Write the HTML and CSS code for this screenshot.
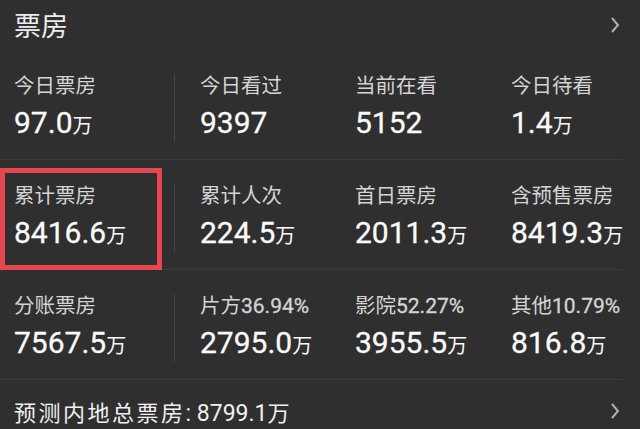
FILE: index.html
```html
<!DOCTYPE html>
<html lang="zh">
<head>
    <meta charset="UTF-8">
    <meta name="viewport" content="width=device-width, initial-scale=1.0">
    <title>票房</title>
    <link rel="stylesheet" href="styles.css">
</head>
<body>

<div class="header">
    <h1>票房</h1>
    <svg class="arrow" width="10" height="18" viewBox="0 0 10 18"><path d="M2 2 L8 9 L2 16" fill="none" stroke="#b0b0b0" stroke-width="2"/></svg>
</div>

<div class="rows">
    <div class="row">
        <div class="cell first">
            <div class="label">今日票房</div>
            <div class="value">97.0<span class="unit">万</span></div>
        </div>
        <div class="cell">
            <div class="label">今日看过</div>
            <div class="value">9397</div>
        </div>
        <div class="cell wide">
            <div class="label">当前在看</div>
            <div class="value">5152</div>
        </div>
        <div class="cell">
            <div class="label">今日待看</div>
            <div class="value">1.4<span class="unit">万</span></div>
        </div>
    </div>

    <div class="row">
        <div class="cell first">
            <div class="mark">
                <div class="label">累计票房</div>
                <div class="value">8416.6<span class="unit">万</span></div>
            </div>
        </div>
        <div class="cell">
            <div class="label">累计人次</div>
            <div class="value">224.5<span class="unit">万</span></div>
        </div>
        <div class="cell wide">
            <div class="label">首日票房</div>
            <div class="value">2011.3<span class="unit">万</span></div>
        </div>
        <div class="cell">
            <div class="label">含预售票房</div>
            <div class="value">8419.3<span class="unit">万</span></div>
        </div>
    </div>

    <div class="row">
        <div class="cell first">
            <div class="label">分账票房</div>
            <div class="value">7567.5<span class="unit">万</span></div>
        </div>
        <div class="cell">
            <div class="label">片方<span class="pct">36.94%</span></div>
            <div class="value">2795.0<span class="unit">万</span></div>
        </div>
        <div class="cell wide">
            <div class="label">影院<span class="pct">52.27%</span></div>
            <div class="value">3955.5<span class="unit">万</span></div>
        </div>
        <div class="cell">
            <div class="label">其他<span class="pct">10.79%</span></div>
            <div class="value">816.8<span class="unit">万</span></div>
        </div>
    </div>
</div>

<div class="footer">
    <div class="forecast"><span class="forecast-label">预测内地总票房</span>: 8799.1<span class="unit">万</span></div>
    <svg class="arrow" width="10" height="18" viewBox="0 0 10 18"><path d="M2 2 L8 9 L2 16" fill="none" stroke="#b0b0b0" stroke-width="2"/></svg>
</div>

</body>
</html>
```

FILE: styles.css
```css
body {
    margin: 0;
    padding: 0;
    background-color: #2f2f2f;
    color: #f5f5f5;
    font-family: Roboto, "Noto Sans CJK SC", sans-serif;
    overflow: hidden;
}
.header {
    display: flex;
    justify-content: space-between;
    align-items: center;
    height: 50px;
    padding: 0 20px 0 14px;
    box-sizing: border-box;
}
.header h1 {
    margin: 0;
    font-size: 27px;
    font-weight: 400;
    line-height: 30px;
    color: #ececec;
    font-family: "Noto Sans CJK SC", sans-serif;
}
.rows {
    margin-right: 18px;
}
.row {
    display: flex;
    height: 110px;
    padding: 24px 0 0 14px;
    box-sizing: border-box;
    border-bottom: 1px solid #3b3b3b;
}
.cell {
    flex: none;
    width: 155px;
    align-self: flex-start;
}
.cell.wide {
    width: 156px;
}
.cell.first {
    width: 160px;
    margin-right: 25px;
    border-right: 1px solid #444;
}
.label {
    font-size: 20.5px;
    line-height: 24px;
    color: #d4d4d4;
    white-space: nowrap;
}
.pct {
    font-size: 21px;
    -webkit-text-stroke: 0.3px #d4d4d4;
}
.value {
    margin-top: 8px;
    font-size: 30px;
    line-height: 34px;
    font-weight: 400;
    color: #fafafa;
    white-space: nowrap;
    -webkit-text-stroke: 0.3px #fafafa;
}
.unit {
    font-size: 20px;
    font-weight: 400;
    font-family: "Noto Sans CJK SC", sans-serif;
    -webkit-text-stroke: 0;
}
.mark {
    margin: -16px 12px -18px -14px;
    padding: 11px 0 13px 9px;
    border: 5px solid #e5464f;
}
.footer {
    display: flex;
    justify-content: space-between;
    align-items: center;
    height: 62px;
    padding: 0 20px 0 14px;
}
.forecast {
    font-size: 23px;
    color: #f0f0f0;
    white-space: nowrap;
}
.forecast-label {
    font-size: 22px;
    font-family: "Noto Sans CJK SC", sans-serif;
    letter-spacing: 2.5px;
}
.forecast .unit {
    font-size: 22px;
}
.arrow {
    display: block;
}
```
